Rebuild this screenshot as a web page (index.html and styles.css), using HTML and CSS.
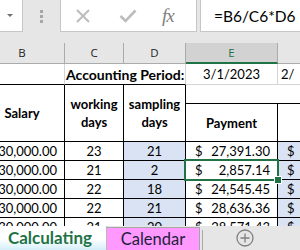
FILE: index.html
```html
<!DOCTYPE html>
<html lang="en">
<head>
  <meta charset="UTF-8">
  <title>Calculating</title>
  <link rel="stylesheet" href="styles.css">
</head>
<body>
<div class="app">
  <!--公式栏-->
  <div class="toolbar">
    <div class="namebox"><span class="arrow"></span></div>
    <div class="grip"><i></i><i></i><i></i></div>
    <div class="fxbox">
      <svg class="ico-x" width="16" height="16" viewBox="0 0 16 16"><path d="M2 2 L14 14 M14 2 L2 14" stroke="#bdbdbd" stroke-width="2" fill="none"/></svg>
      <svg class="ico-ok" width="18" height="14" viewBox="0 0 18 14"><path d="M1.5 7 L6.5 12 L16.5 1.5" stroke="#bdbdbd" stroke-width="2.6" fill="none"/></svg>
      <span class="fx">fx</span>
    </div>
    <div class="formula">=B6/C6*D6</div>
  </div>

  <!--表格-->
  <div class="sheet">
    <div class="grid">
      <div class="ch">B</div>
      <div class="ch">C</div>
      <div class="ch">D</div>
      <div class="ch sel">E</div>
      <div class="ch"></div>

      <div class="r1"></div>
      <div class="r1 period">Accounting Period:</div>
      <div class="r1 mid">3/1/2023</div>
      <div class="r1 f">2/</div>

      <div class="hd span2">Salary</div>
      <div class="hd span2">working<br>days</div>
      <div class="hd span2">sampling<br>days</div>
      <div class="hd top"></div>
      <div class="hd">Payment</div>
      <div class="hd"></div>

      <div class="c num">30,000.00</div>
      <div class="c mid">23</div>
      <div class="c mid blue">21</div>
      <div class="c acc"><span>$</span><span>27,391.30</span></div>
      <div class="c acc blue"><span>$</span></div>

      <div class="c num">30,000.00</div>
      <div class="c mid">21</div>
      <div class="c mid blue">2</div>
      <div class="c acc active"><span>$</span><span>2,857.14</span></div>
      <div class="c acc blue"><span>$</span></div>

      <div class="c num">30,000.00</div>
      <div class="c mid">22</div>
      <div class="c mid blue">18</div>
      <div class="c acc"><span>$</span><span>24,545.45</span></div>
      <div class="c acc blue"><span>$</span></div>

      <div class="c num">30,000.00</div>
      <div class="c mid">22</div>
      <div class="c mid blue">21</div>
      <div class="c acc"><span>$</span><span>28,636.36</span></div>
      <div class="c acc blue"><span>$</span></div>

      <div class="c num">30,000.00</div>
      <div class="c mid">21</div>
      <div class="c mid blue">20</div>
      <div class="c acc"><span>$</span><span>28,571.43</span></div>
      <div class="c acc blue"><span>$</span></div>
    </div>
  </div>

  <!--工作表标签-->
  <div class="tabs">
    <div class="tab on">Calculating</div>
    <div class="tab pink">Calendar</div>
    <div class="sep"></div>
    <div class="add">
      <svg width="18" height="18" viewBox="0 0 18 18"><circle cx="9" cy="9" r="8" stroke="#808080" stroke-width="1.3" fill="none"/><path d="M9 4.5 V13.5 M4.5 9 H13.5" stroke="#808080" stroke-width="1.3"/></svg>
    </div>
  </div>
</div>
</body>
</html>
```

FILE: styles.css
```css
* {
  margin: 0;
  padding: 0;
  box-sizing: border-box;
}

body {
  width: 300px;
  height: 250px;
  overflow: hidden;
  background: #fff;
  font-family: Lato, "Liberation Sans", sans-serif;
  color: #000;
}

.app {
  width: 300px;
  height: 250px;
  display: flex;
  flex-direction: column;
  overflow: hidden;
}

/* 公式栏 */
.toolbar {
  height: 43px;
  flex: none;
  background: #e6e6e6;
  display: flex;
  align-items: flex-start;
}

.namebox {
  width: 23px;
  height: 32px;
  background: #fff;
  border-right: 1px solid #c6c6c6;
  border-bottom: 1px solid #c6c6c6;
  display: flex;
  align-items: center;
  justify-content: center;
}

.arrow {
  width: 0;
  height: 0;
  border-left: 3px solid transparent;
  border-right: 3px solid transparent;
  border-top: 3px solid #707070;
  margin-left: -2px;
}

.grip {
  width: 37px;
  height: 32px;
  display: flex;
  flex-direction: column;
  align-items: center;
  justify-content: center;
  gap: 2px;
}

.grip i {
  display: block;
  width: 3px;
  height: 3px;
  background: #a6a6a6;
}

.fxbox {
  width: 137px;
  height: 32px;
  background: #fff;
  border: 1px solid #c6c6c6;
  border-top: none;
  display: flex;
  align-items: center;
  padding-left: 14px;
}

.ico-x {
  margin-top: 1px;
}

.ico-ok {
  margin-left: 28px;
  margin-top: 1px;
}

.fx {
  margin-left: 25px;
  font-family: "Liberation Serif", serif;
  font-style: italic;
  font-size: 19px;
  color: #7f7f7f;
  letter-spacing: -1px;
}

.formula {
  flex: 1;
  height: 32px;
  margin-left: 3px;
  background: #fff;
  border-left: 1px solid #c6c6c6;
  border-bottom: 1px solid #c6c6c6;
  padding-left: 13px;
  font-size: 15.5px;
  line-height: 32px;
}

/* 表格 */
.sheet {
  flex: 1;
  overflow: hidden;
}

.grid {
  display: grid;
  grid-template-columns: 85px 59px 62px 92px 40px;
  grid-template-rows: 21px 21px 19px 38px repeat(5, 19px);
  margin-left: -20px;
  font-size: 13px;
}

.grid > div {
  border-right: 1px solid #000;
  border-bottom: 1px solid #000;
  white-space: nowrap;
}

.ch {
  background: #e6e6e6;
  border-right-color: #ababab !important;
  border-bottom-color: #ababab !important;
  font-family: "Open Sans", sans-serif;
  font-size: 11.5px;
  color: #222;
  text-align: center;
  line-height: 20px;
}

.ch.sel {
  background: #d2d2d2;
  color: #217346;
  border-bottom: 2px solid #217346 !important;
}

.r1 {
  border-right-color: #d4d4d4 !important;
  line-height: 21px;
}

.r1.period {
  grid-column: span 2;
  font-weight: bold;
  font-size: 14px;
  padding-left: 1px;
}

.r1.f {
  border-bottom-color: #d4d4d4 !important;
  padding-left: 3px;
}

.r1.mid {
  border-bottom-color: #d4d4d4 !important;
}

.mid {
  text-align: center;
}

.hd {
  font-weight: bold;
  display: flex;
  align-items: center;
  justify-content: center;
  text-align: center;
  line-height: 18px;
}

.hd.span2 {
  grid-row: span 2;
}

.grid > .hd.top {
  grid-column: span 2;
  border-right: none;
}

.hd.span2:first-child {
  font-size: 14px;
}

.c {
  line-height: 18px;
}

.num {
  text-align: right;
  padding-right: 7px;
}

.blue {
  background: #dae3f3;
}

.acc {
  display: flex;
  justify-content: space-between;
  padding: 0 7px 0 9px;
}

.active {
  position: relative;
}

.active::after {
  content: "";
  position: absolute;
  left: -2px;
  top: -2px;
  right: -2px;
  bottom: -2px;
  border: 2px solid #217346;
}

.active::before {
  content: "";
  position: absolute;
  right: -5px;
  bottom: -5px;
  width: 6px;
  height: 6px;
  background: #217346;
  border: 1px solid #fff;
  z-index: 1;
}

/* 标签 */
.tabs {
  height: 24px;
  flex: none;
  background: #e6e6e6;
  display: flex;
  align-items: stretch;
}

.tab {
  line-height: 23px;
  text-align: center;
}

.tab.on {
  width: 107px;
  font-size: 17px;
  font-weight: bold;
  color: #217346;
  background: linear-gradient(#fff 55%, #d4eef8);
  border-right: 1px solid #b9b9b9;
  padding-right: 6px;
}

.tab.pink {
  width: 93px;
  margin-top: 1px;
  font-size: 16.5px;
  background: #ff99ff;
  border-top: 1px solid #a6a6a6;
  border-right: 1px solid #a6a6a6;
  color: #1e1e3c;
}

.sep {
  width: 1px;
  margin: 4px 0 0 2px;
  background: #ababab;
}

.add {
  display: flex;
  align-items: center;
  padding-left: 33px;
}
```
